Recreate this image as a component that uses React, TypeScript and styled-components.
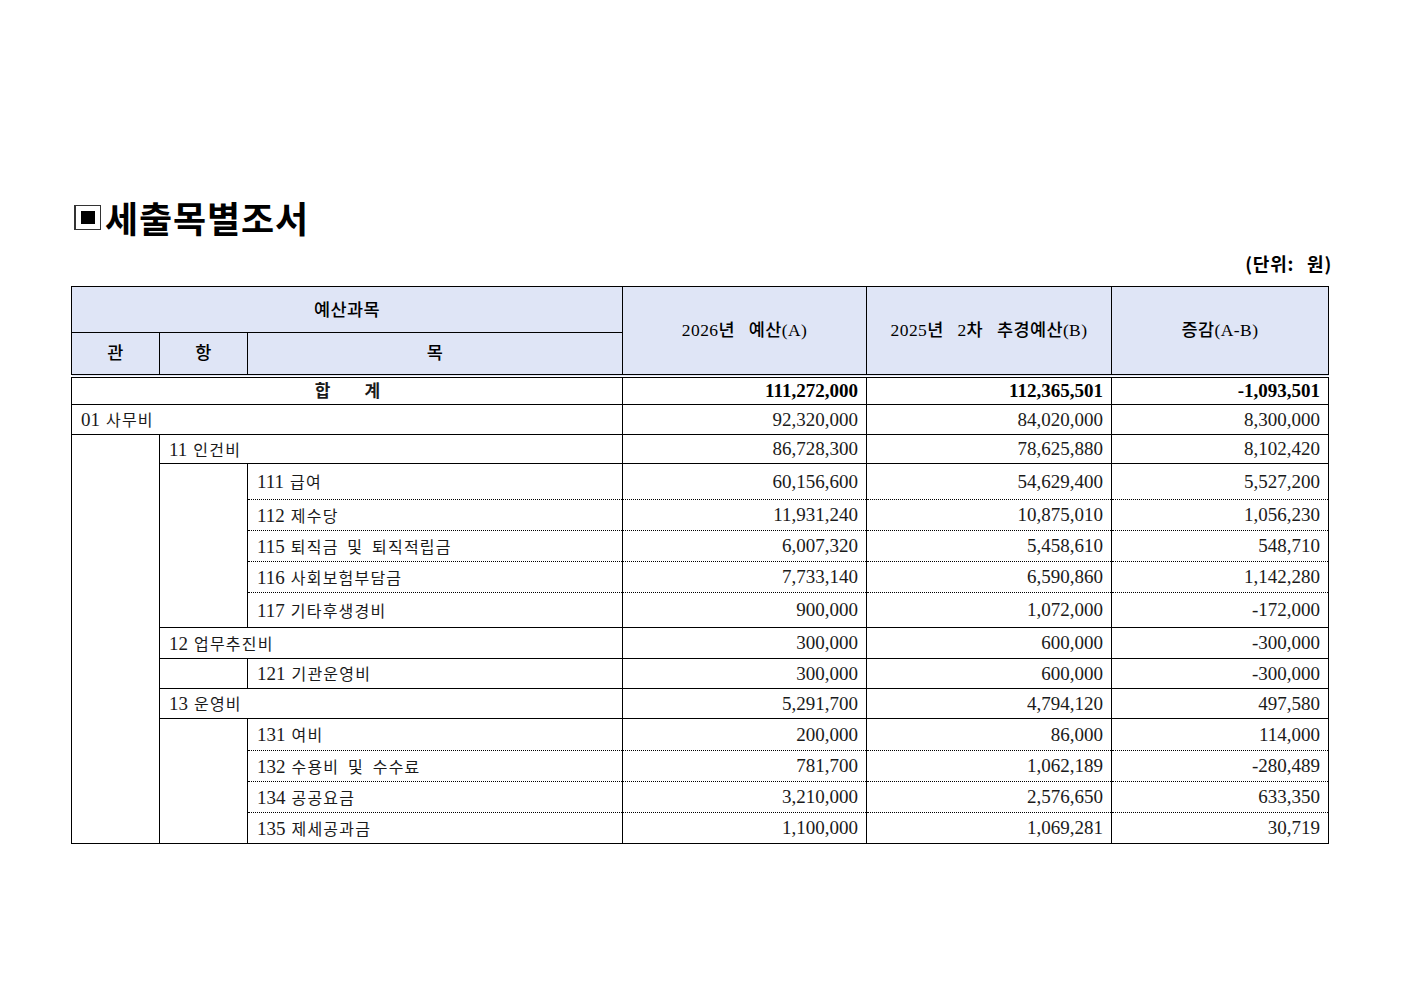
import React from 'react';
import styled, { createGlobalStyle } from 'styled-components';

const Global = createGlobalStyle`
  html, body { margin: 0; padding: 0; background: #fff; }
  body { font-family: "Noto Sans CJK KR", sans-serif; color: #000; }
`;

const Page = styled.div`
  padding: 197px 0 40px 71px;
  width: 1257px;
`;

const TitleRow = styled.h1`
  margin: 0;
  padding-left: 3px;
  display: flex;
  align-items: center;
  gap: 4px;
  height: 40px;
  font-family: "Noto Sans CJK KR", sans-serif;
  font-weight: 700;
  font-size: 36px;
  line-height: 40px;
  letter-spacing: 0.9px;
`;

const Bullet = styled.span`
  width: 27px;
  height: 25px;
  box-sizing: border-box;
  border: 1px solid #333;
  border-left-width: 2px;
  display: flex;
  align-items: center;
  justify-content: center;
  background: #fff;
  &::after {
    content: '';
    width: 14px;
    height: 13px;
    background: #000;
  }
`;

const Unit = styled.div`
  margin: 14px -4px 0 0;
  text-align: right;
  font-family: "Noto Sans CJK KR", sans-serif;
  font-weight: 700;
  font-size: 18px;
  line-height: 24px;
  letter-spacing: 0.8px;
  word-spacing: 8px;
`;

const Table = styled.table`
  margin-top: 11px;
  width: 1257px;
  border-collapse: collapse;
  table-layout: fixed;
`;

const HeadRow = styled.tr<{ $h: number }>`
  height: ${p => p.$h}px;
`;

const HeadCell = styled.th<{ $double?: boolean }>`
  border: 1px solid #000;
  border-bottom: ${p => (p.$double ? '4px double #000' : '1px solid #000')};
  background: #dfe5f6;
  padding: 0;
  text-align: center;
  vertical-align: middle;
  font-family: "Liberation Serif", "Noto Sans CJK KR", serif;
  font-weight: 500;
  font-size: 17.5px;
  line-height: 22px;
  letter-spacing: 0.4px;
  word-spacing: 9px;
  white-space: nowrap;
`;

const Row = styled.tr<{ $h: number }>`
  height: ${p => p.$h}px;
`;

const Cell = styled.td<{
  $dotTop?: boolean;
  $dotBottom?: boolean;
  $align?: 'left' | 'right' | 'center';
  $bold?: boolean;
}>`
  border: 1px solid #000;
  border-top-style: ${p => (p.$dotTop ? 'dotted' : 'solid')};
  border-bottom-style: ${p => (p.$dotBottom ? 'dotted' : 'solid')};
  padding: 0 8px 0 9px;
  text-align: ${p => p.$align || 'left'};
  vertical-align: middle;
  font-family: "Liberation Serif", "Noto Sans CJK KR", serif;
  font-size: 19px;
  font-weight: ${p => (p.$bold ? 700 : 400)};
  line-height: 22px;
  white-space: nowrap;
  color: ${p => (p.$bold ? '#000' : '#1a1a1a')};
`;

const EmptyCell = styled.td`
  border: 1px solid #000;
  padding: 0;
`;

const Code = styled.span`
  font-family: "Liberation Serif", serif;
  font-size: 19px;
`;

const Name = styled.span`
  margin-left: 6px;
  font-family: "Noto Sans CJK KR", sans-serif;
  font-size: 16px;
  letter-spacing: 1.2px;
  word-spacing: 4px;
`;

const TotalLabel = styled.span`
  font-family: "Noto Sans CJK KR", sans-serif;
  font-size: 17px;
  font-weight: 700;
`;

type Kind = 'gwan' | 'hang' | 'mok';
interface Item {
  kind: Kind;
  code: string;
  name: string;
  a: string;
  b: string;
  c: string;
  h: number;
  gwanSpan?: number;
  hangSpan?: number;
  dotTop?: boolean;
  dotBottom?: boolean;
}

const items: Item[] = [
  { kind: 'gwan', code: '01', name: '사무비', a: '92,320,000', b: '84,020,000', c: '8,300,000', h: 30 },
  { kind: 'hang', code: '11', name: '인건비', a: '86,728,300', b: '78,625,880', c: '8,102,420', h: 29, gwanSpan: 13 },
  { kind: 'mok', code: '111', name: '급여', a: '60,156,600', b: '54,629,400', c: '5,527,200', h: 36, hangSpan: 5, dotBottom: true },
  { kind: 'mok', code: '112', name: '제수당', a: '11,931,240', b: '10,875,010', c: '1,056,230', h: 31, dotTop: true, dotBottom: true },
  { kind: 'mok', code: '115', name: '퇴직금 및 퇴직적립금', a: '6,007,320', b: '5,458,610', c: '548,710', h: 31, dotTop: true, dotBottom: true },
  { kind: 'mok', code: '116', name: '사회보험부담금', a: '7,733,140', b: '6,590,860', c: '1,142,280', h: 31, dotTop: true, dotBottom: true },
  { kind: 'mok', code: '117', name: '기타후생경비', a: '900,000', b: '1,072,000', c: '-172,000', h: 35, dotTop: true },
  { kind: 'hang', code: '12', name: '업무추진비', a: '300,000', b: '600,000', c: '-300,000', h: 31 },
  { kind: 'mok', code: '121', name: '기관운영비', a: '300,000', b: '600,000', c: '-300,000', h: 30, hangSpan: 1 },
  { kind: 'hang', code: '13', name: '운영비', a: '5,291,700', b: '4,794,120', c: '497,580', h: 30 },
  { kind: 'mok', code: '131', name: '여비', a: '200,000', b: '86,000', c: '114,000', h: 32, hangSpan: 4, dotBottom: true },
  { kind: 'mok', code: '132', name: '수용비 및 수수료', a: '781,700', b: '1,062,189', c: '-280,489', h: 31, dotTop: true, dotBottom: true },
  { kind: 'mok', code: '134', name: '공공요금', a: '3,210,000', b: '2,576,650', c: '633,350', h: 31, dotTop: true, dotBottom: true },
  { kind: 'mok', code: '135', name: '제세공과금', a: '1,100,000', b: '1,069,281', c: '30,719', h: 31, dotTop: true },
];

const labelSpan: Record<Kind, number> = { gwan: 3, hang: 2, mok: 1 };

export default function App() {
  return (
    <>
      <Global />
      <Page>
        <TitleRow>
          <Bullet />
          세출목별조서
        </TitleRow>
        <Unit>(단위: 원)</Unit>
        <Table>
          <colgroup>
            <col style={{ width: 88 }} />
            <col style={{ width: 88 }} />
            <col style={{ width: 375 }} />
            <col style={{ width: 244 }} />
            <col style={{ width: 245 }} />
            <col style={{ width: 217 }} />
          </colgroup>
          <thead>
            <HeadRow $h={46}>
              <HeadCell colSpan={3}>예산과목</HeadCell>
              <HeadCell rowSpan={2} $double>2026년 예산(A)</HeadCell>
              <HeadCell rowSpan={2} $double>2025년 2차 추경예산(B)</HeadCell>
              <HeadCell rowSpan={2} $double>증감(A-B)</HeadCell>
            </HeadRow>
            <HeadRow $h={43}>
              <HeadCell $double>관</HeadCell>
              <HeadCell $double>항</HeadCell>
              <HeadCell $double>목</HeadCell>
            </HeadRow>
          </thead>
          <tbody>
            <Row $h={29}>
              <Cell colSpan={3} $align="center">
                <TotalLabel>합　　계</TotalLabel>
              </Cell>
              <Cell $align="right" $bold>111,272,000</Cell>
              <Cell $align="right" $bold>112,365,501</Cell>
              <Cell $align="right" $bold>-1,093,501</Cell>
            </Row>
            {items.map(it => (
              <Row key={it.code} $h={it.h}>
                {it.gwanSpan ? <EmptyCell rowSpan={it.gwanSpan} /> : null}
                {it.hangSpan ? <EmptyCell rowSpan={it.hangSpan} /> : null}
                <Cell colSpan={labelSpan[it.kind]} $dotTop={it.dotTop} $dotBottom={it.dotBottom}>
                  <Code>{it.code}</Code>
                  <Name>{it.name}</Name>
                </Cell>
                <Cell $align="right" $dotTop={it.dotTop} $dotBottom={it.dotBottom}>{it.a}</Cell>
                <Cell $align="right" $dotTop={it.dotTop} $dotBottom={it.dotBottom}>{it.b}</Cell>
                <Cell $align="right" $dotTop={it.dotTop} $dotBottom={it.dotBottom}>{it.c}</Cell>
              </Row>
            ))}
          </tbody>
        </Table>
      </Page>
    </>
  );
}
